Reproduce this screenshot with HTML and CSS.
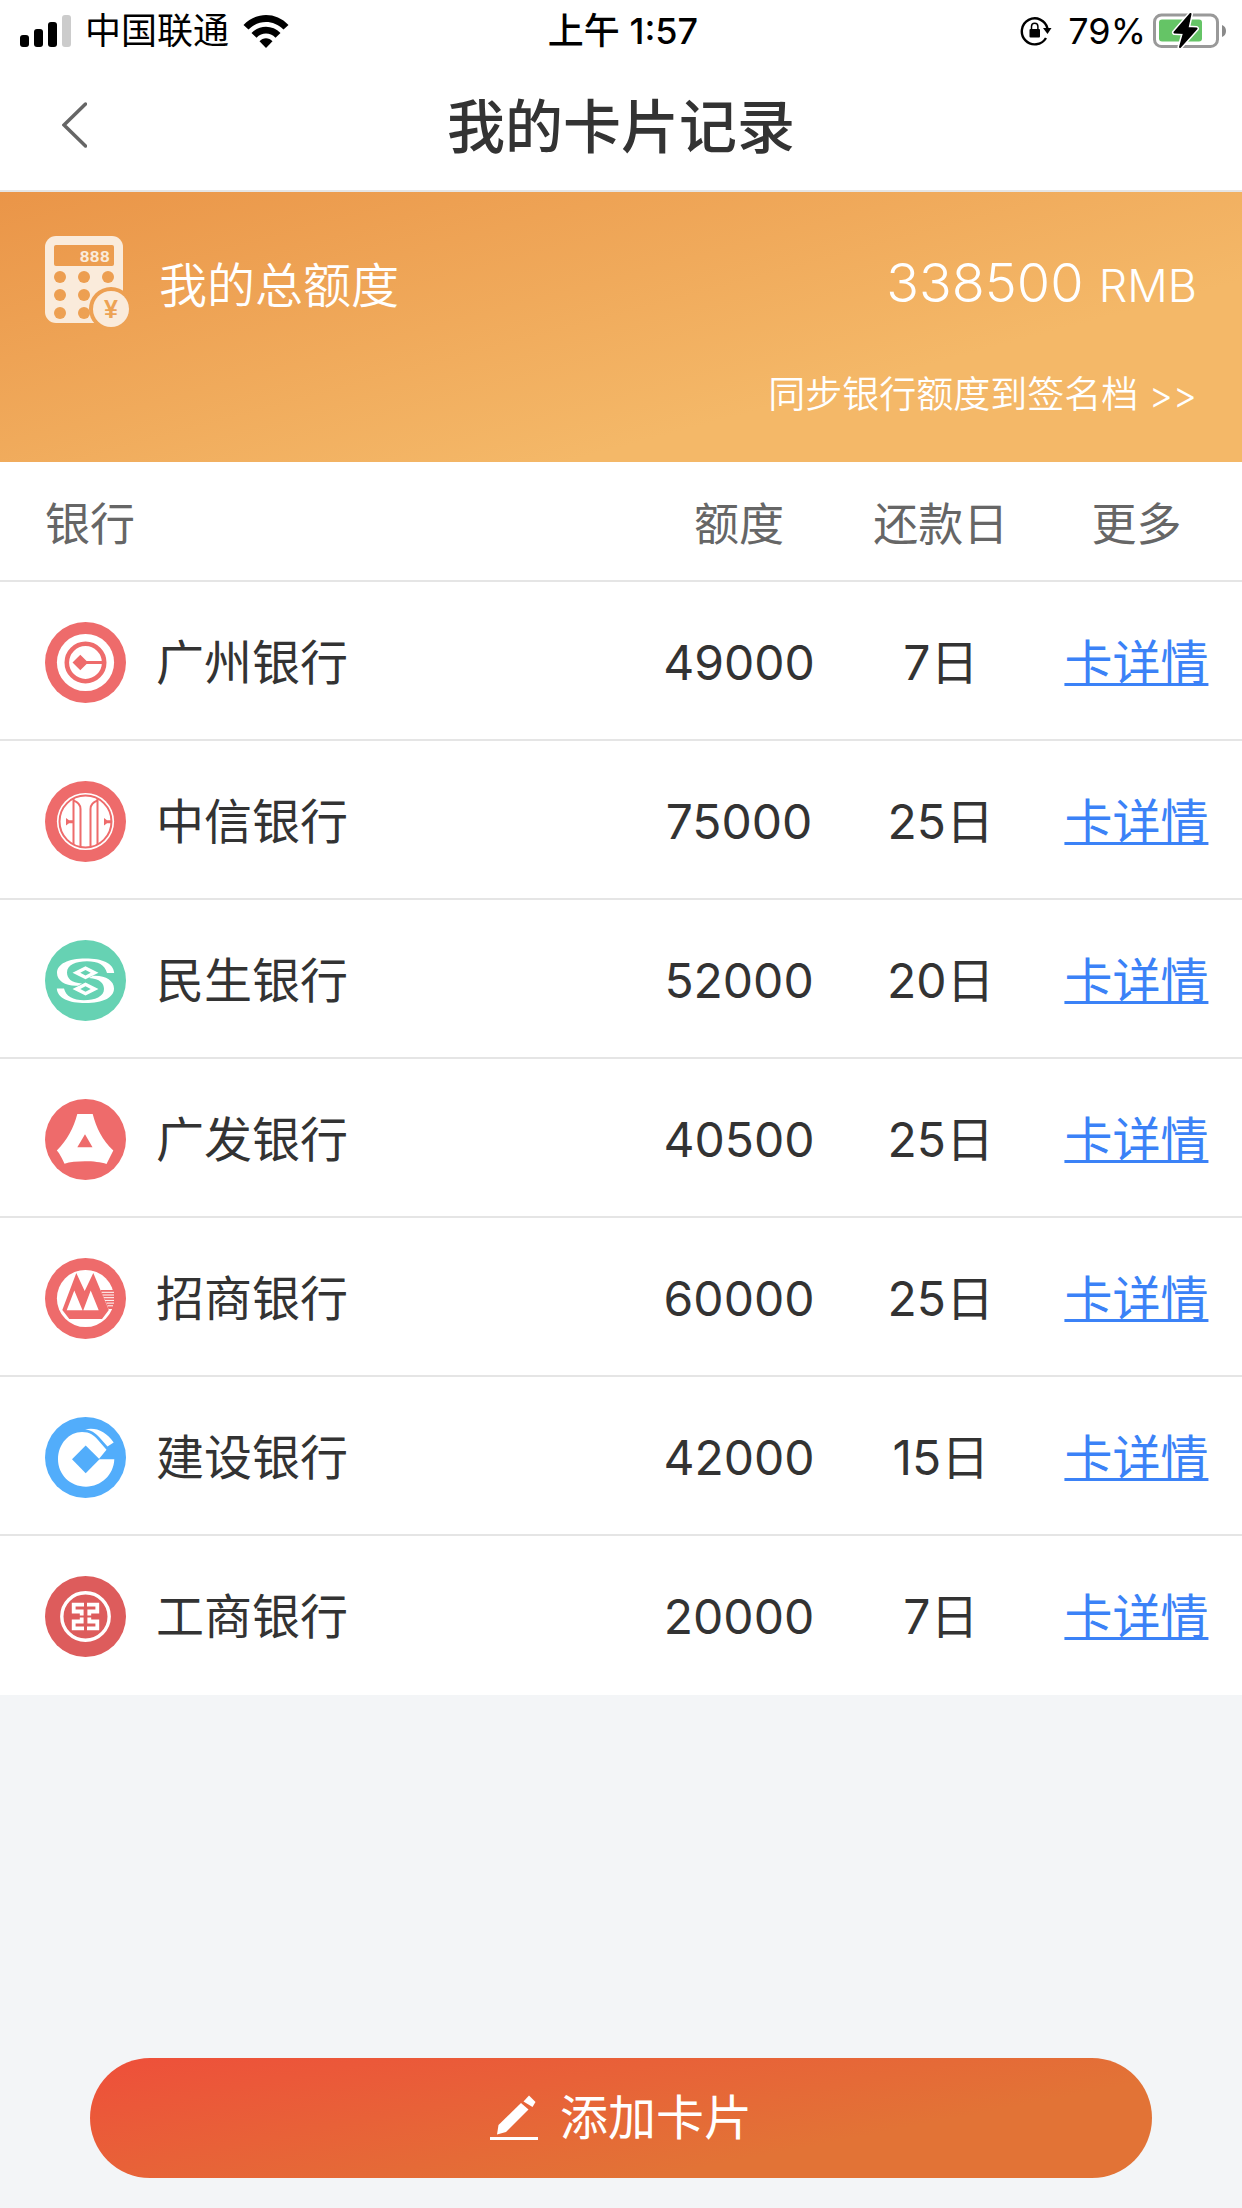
FILE: index.html
```html
<!DOCTYPE html>
<html lang="zh-CN">
<head>
    <meta charset="UTF-8">
    <meta name="viewport" content="width=device-width, initial-scale=1.0">
    <title>我的卡片记录</title>
    <link rel="stylesheet" href="styles.css">
</head>
<body>
    <div class="page">
        <!-- 状态栏 -->
        <div class="status-bar">
            <div class="status-left">
                <svg width="51" height="32" viewBox="0 0 51 32">
                    <rect x="0" y="20" width="9" height="12" rx="3"/>
                    <rect x="14" y="14" width="9" height="18" rx="3"/>
                    <rect x="28" y="7" width="9" height="25" rx="3"/>
                    <rect x="42" y="0" width="9" height="32" rx="3" fill="#ccc"/>
                </svg>
                <span>中国联通</span>
                <svg width="46" height="33" viewBox="0 0 46 33">
                    <path d="M0.5 10 C13 -3.3 33 -3.3 45.5 10 L40.5 14.5 C30.5 4.5 15.5 4.5 5.5 14.5 Z"/>
                    <path d="M8.5 18 C16.5 9.7 29.5 9.7 37.5 18 L32.5 22.7 C27 17.2 19 17.2 13.5 22.7 Z"/>
                    <path d="M16.5 26.3 C20 22.2 26 22.2 29.5 26.3 L23 33 Z"/>
                </svg>
            </div>
            <div class="status-time">上午 1:57</div>
            <div class="status-right">
                <svg width="32" height="30" viewBox="0 0 32 30">
                    <path d="M27.5 12.5 A13 13 0 1 0 26 22" fill="none" stroke="#000" stroke-width="2.4"/>
                    <path d="M23 12 H31.5 L27.5 18 Z"/>
                    <rect x="9.5" y="13" width="10.5" height="8.5" rx="1"/>
                    <path d="M11.5 13 V10.5 a3.2 3.2 0 0 1 6.4 0 V13" fill="none" stroke="#000" stroke-width="1.5"/>
                </svg>
                <span class="battery-text">79%</span>
                <svg width="73" height="36" viewBox="0 0 73 36">
                    <rect x="1.5" y="2" width="63" height="31.5" rx="7" fill="none" stroke="#999" stroke-width="3"/>
                    <path d="M69 12 a6.5 6.5 0 0 1 0 12 Z" fill="#8a8a8a"/>
                    <rect x="6" y="6.5" width="43" height="22" rx="3" fill="#65c466"/>
                    <path d="M37.5 1 L21.5 19.5 L31 20 L27 34 L43.5 15.5 L34.5 15 Z" stroke="#fff" stroke-width="5" stroke-linejoin="round"/>
                    <path d="M37.5 1 L21.5 19.5 L31 20 L27 34 L43.5 15.5 L34.5 15 Z" stroke="#000" stroke-width="2" stroke-linejoin="round"/>
                </svg>
            </div>
        </div>

        <!-- 标题栏 -->
        <header class="nav-bar">
            <button class="back" aria-label="返回">
                <svg width="25" height="46" viewBox="0 0 25 46">
                    <path d="M23.5 2 L2 23 L23.5 44" fill="none" stroke="#666" stroke-width="3.5" stroke-linecap="round"/>
                </svg>
            </button>
            <h1>我的卡片记录</h1>
        </header>

        <!-- 总额度 -->
        <section class="total">
            <div class="total-row">
                <svg width="84" height="92" viewBox="0 0 84 92">
                    <defs>
                        <mask id="calcMask">
                            <rect width="84" height="92" fill="#fff"/>
                            <rect x="9" y="9" width="60" height="21" rx="2" fill="#000"/>
                            <g fill="#000">
                                <circle cx="15" cy="41" r="6"/><circle cx="39" cy="41" r="6"/><circle cx="63" cy="41" r="6"/>
                                <circle cx="15" cy="59" r="6"/><circle cx="39" cy="59" r="6"/><circle cx="63" cy="59" r="6"/>
                                <circle cx="15" cy="77" r="6"/><circle cx="39" cy="77" r="6"/>
                                <circle cx="66" cy="73" r="22"/>
                            </g>
                        </mask>
                    </defs>
                    <rect width="78" height="87" rx="11" fill="#faebdb" mask="url(#calcMask)"/>
                    <text class="calc-num" x="65" y="26" text-anchor="end">888</text>
                    <circle cx="66" cy="73" r="18" fill="#faebdb"/>
                    <text class="calc-yen" x="66" y="82" text-anchor="middle">¥</text>
                </svg>
                <span class="total-label">我的总额度</span>
                <span class="total-value">338500 <small>RMB</small></span>
            </div>
            <a class="sync" href="#">同步银行额度到签名档 &gt;&gt;</a>
        </section>

        <!-- 卡片列表 -->
        <table class="cards">
            <thead>
                <tr>
                    <th class="col-bank">银行</th>
                    <th class="col-limit">额度</th>
                    <th class="col-day">还款日</th>
                    <th class="col-more">更多</th>
                </tr>
            </thead>
            <tbody>
                <tr>
                    <td>
                        <div class="bank">
                            <svg width="81" height="81" viewBox="0 0 81 81">
                                <circle cx="40.5" cy="40.5" r="40.5" fill="#ee6b6b"/>
                                <circle cx="40.5" cy="40.5" r="28.6" fill="#fff"/>
                                <circle cx="40.5" cy="40.5" r="18.7" fill="none" stroke="#ee6b6b" stroke-width="4.6"/>
                                <path d="M27.5 40.5 L35.3 32.7 L41.6 39 H58 V42 H41.6 L35.3 48.3 Z" fill="#ee6b6b"/>
                            </svg>
                            <span>广州银行</span>
                        </div>
                    </td>
                    <td>49000</td>
                    <td>7日</td>
                    <td><a href="#">卡详情</a></td>
                </tr>
                <tr>
                    <td>
                        <div class="bank">
                            <svg width="81" height="81" viewBox="0 0 81 81">
                                <circle cx="40.5" cy="40.5" r="40.5" fill="#ee6b6b"/>
                                <circle cx="40.5" cy="40.5" r="28.6" fill="#fff"/>
                                <g fill="none" stroke="#ee6b6b" stroke-width="2">
                                    <circle cx="40.5" cy="40.5" r="26"/>
                                    <path d="M28.5 18 V63 M52.5 18 V63"/>
                                    <path d="M28.5 19.5 C32.5 21 35.5 23.5 35.5 28 V66 M52.5 19.5 C48.5 21 45.5 23.5 45.5 28 V66"/>
                                </g>
                                <path d="M21 37 L24 39.3 H28 V42.3 H24 L21 44.5 Z M59 37 L62 39.3 H66 V42.3 H62 L59 44.5 Z" fill="#ee6b6b"/>
                            </svg>
                            <span>中信银行</span>
                        </div>
                    </td>
                    <td>75000</td>
                    <td>25日</td>
                    <td><a href="#">卡详情</a></td>
                </tr>
                <tr>
                    <td>
                        <div class="bank">
                            <svg width="81" height="81" viewBox="0 0 81 81">
                                <circle cx="40.5" cy="40.5" r="40.5" fill="#66d2b3"/>
                                <g fill="#fff">
                                    <path d="M69.2 33 C68.5 23 57 18.5 40.5 18.5 C23 18.5 12 24 12 33 C12 41 21 46.5 33 45.7 L37 43.5 C26 43 22 38 22 32.5 C22 25 31 21.3 42 21.3 C53 21.3 60 25 62 33 Z"/>
                                    <path d="M11.8 48.5 C12.5 58.5 24 63 40.5 63 C58 63 69 57.5 69 48.5 C69 40.5 60 35 48 35.8 L44 38 C55 38.5 59 43.5 59 49 C59 56.5 50 60.2 39 60.2 C28 60.2 21 56.5 19 48.5 Z"/>
                                    <path fill-rule="evenodd" d="M27.5 32.7 L40.5 26.3 L53.5 32.7 L40.5 39.2 Z M35.3 32.7 L40.5 35.5 L45.7 32.7 L40.5 29.9 Z"/>
                                    <path fill-rule="evenodd" d="M27.5 49 L40.5 42.5 L53.5 49 L40.5 55.5 Z M35.3 49 L40.5 51.8 L45.7 49 L40.5 46.2 Z"/>
                                </g>
                            </svg>
                            <span>民生银行</span>
                        </div>
                    </td>
                    <td>52000</td>
                    <td>20日</td>
                    <td><a href="#">卡详情</a></td>
                </tr>
                <tr>
                    <td>
                        <div class="bank">
                            <svg width="81" height="81" viewBox="0 0 81 81">
                                <circle cx="40.5" cy="40.5" r="40.5" fill="#ee6b6b"/>
                                <path fill="#fff" fill-rule="evenodd" d="M32.3 15 H47.7 C51.5 29 57 41 68.3 51.5 L61.5 65 C51 61.5 30 61.5 19.5 64.7 C16.5 58 13.5 53 11.8 51.5 C22.5 41 28.5 29 32.3 15 Z M40 35.3 L32.3 48.3 H47.5 Z"/>
                            </svg>
                            <span>广发银行</span>
                        </div>
                    </td>
                    <td>40500</td>
                    <td>25日</td>
                    <td><a href="#">卡详情</a></td>
                </tr>
                <tr>
                    <td>
                        <div class="bank">
                            <svg width="81" height="81" viewBox="0 0 81 81">
                                <circle cx="40.5" cy="40.5" r="40.5" fill="#ee6b6b"/>
                                <circle cx="40.5" cy="40.5" r="28.6" fill="#fff"/>
                                <path fill="#ee6b6b" d="M31.3 15 L39.7 33 L48.3 15 L63.8 52 L57 61 H24.3 L17.3 52 Z"/>
                                <path fill="#fff" d="M29.3 32.5 L37.5 52.3 H21.7 Z M45.7 32.5 L53.7 52.3 H38.3 Z"/>
                                <path fill="#ee6b6b" d="M55.5 32 H71 V51 H63.5 Z"/>
                                <path stroke="#fff" stroke-width="1" d="M57 34.3 H69 M58 37 H69 M59 39.7 H69 M60 42.4 H69 M61.5 45.1 H69 M62.5 47.8 H68"/>
                            </svg>
                            <span>招商银行</span>
                        </div>
                    </td>
                    <td>60000</td>
                    <td>25日</td>
                    <td><a href="#">卡详情</a></td>
                </tr>
                <tr>
                    <td>
                        <div class="bank">
                            <svg width="81" height="81" viewBox="0 0 81 81">
                                <circle cx="40.5" cy="40.5" r="40.5" fill="#52adfb"/>
                                <path fill="#fff" d="M54 42.3 H69.3 C68.8 58 56 69.7 41 69.7 C25 69.7 13 57.5 13 42.3 C13 27 24 15 37 15 C45 15 49 18.5 53 23 L61.5 32.7 L54.3 41.5 Z"/>
                                <path fill="#fff" d="M40 12.5 C51 10 61 14.5 68.7 25.5 L62.5 29.5 L54.5 20.5 C50 15.5 46 13 40 12.5 Z"/>
                                <path fill="#52adfb" d="M40.7 28.5 L54.5 42.3 L40.7 56.2 L27 42.3 Z"/>
                            </svg>
                            <span>建设银行</span>
                        </div>
                    </td>
                    <td>42000</td>
                    <td>15日</td>
                    <td><a href="#">卡详情</a></td>
                </tr>
                <tr>
                    <td>
                        <div class="bank">
                            <svg width="81" height="81" viewBox="0 0 81 81">
                                <circle cx="40.5" cy="40.5" r="40.5" fill="#dd5c5c"/>
                                <g fill="none" stroke="#fff">
                                    <circle cx="40.5" cy="40.5" r="23.7" stroke-width="3.4"/>
                                    <path stroke-width="3.8" d="M39 28.7 H28.7 V35.5 H36.7 V39.5 M39 52.3 H28.7 V45.5 H36.7 V41.5 M42 28.7 H52.3 V35.5 H44.3 V39.5 M42 52.3 H52.3 V45.5 H44.3 V41.5"/>
                                </g>
                            </svg>
                            <span>工商银行</span>
                        </div>
                    </td>
                    <td>20000</td>
                    <td>7日</td>
                    <td><a href="#">卡详情</a></td>
                </tr>
            </tbody>
        </table>

        <footer class="footer">
            <button class="add">
                <svg width="48" height="46" viewBox="0 0 48 46" fill="#fff">
                    <path d="M39 0.5 L45.5 7 L42.5 12 L33.5 6.5 Z"/>
                    <path d="M31 8 L38.5 14.5 L16 37 L7 39.5 L8.5 30 Z"/>
                    <rect x="0" y="42" width="48" height="3"/>
                </svg>
                <span>添加卡片</span>
            </button>
        </footer>
    </div>
</body>
</html>
```

FILE: styles.css
```css
* {
    box-sizing: border-box;
}
body {
    margin: 0;
    font-family: Inter, "Noto Sans CJK SC", sans-serif;
    font-size: 48px;
    font-weight: 380;
    color: #333;
    background-color: #f3f5f7;
}
button {
    border: none;
    background: none;
    padding: 0;
    font-family: inherit;
    font-weight: inherit;
    cursor: pointer;
}
svg {
    display: block;
    flex-shrink: 0;
}
.page {
    min-height: 100vh;
    display: flex;
    flex-direction: column;
}

/* 状态栏 */
.status-bar {
    display: grid;
    grid-template-columns: 1fr auto 1fr;
    align-items: center;
    height: 60px;
    padding: 2px 16px 0 20px;
    background-color: #fff;
    color: #000;
    font-size: 36px;
    line-height: 58px;
}
.status-left,
.status-right {
    display: flex;
    align-items: center;
}
.status-left {
    gap: 14px;
}
.status-right {
    justify-content: flex-end;
}
.status-time {
    font-weight: 500;
}
.battery-text {
    margin: 0 7px 0 16px;
}

/* 标题栏 */
.nav-bar {
    display: grid;
    grid-template-columns: 120px 1fr 120px;
    align-items: center;
    height: 132px;
    background-color: #fff;
    border-bottom: 2px solid #e5e5e5;
}
.back {
    display: flex;
    align-items: center;
    height: 100%;
    padding-left: 62px;
}
.nav-bar h1 {
    margin: 0;
    padding-top: 4px;
    font-size: 58px;
    font-weight: 500;
    line-height: 80px;
    text-align: center;
}

/* 总额度 */
.total {
    display: flex;
    flex-direction: column;
    gap: 40px;
    height: 270px;
    padding: 44px 45px 0;
    color: #fff;
    font-weight: 350;
    background: linear-gradient(165deg, #ea9548, #f4b868 70%);
}
.total-row {
    display: flex;
    align-items: center;
    height: 92px;
}
.calc-num {
    font: bold 17px "Liberation Mono", monospace;
    fill: #faebdb;
}
.calc-yen {
    font: bold 25px "Liberation Sans", sans-serif;
    fill: #eda354;
}
.total-label {
    margin-left: 30px;
}
.total-value {
    margin-left: auto;
    font-size: 54px;
}
.total-value small {
    font-size: 45px;
}
.sync {
    align-self: flex-end;
    color: #fff;
    font-size: 37px;
    line-height: 54px;
    text-decoration: none;
}

/* 卡片列表 */
.cards {
    width: 100%;
    table-layout: fixed;
    border-collapse: separate;
    border-spacing: 0;
    background-color: #fff;
}
.cards th,
.cards td {
    padding: 0;
    border-bottom: 2px solid #e5e5e5;
    text-align: center;
}
.cards th {
    height: 120px;
    color: #666;
    font-size: 45px;
    font-weight: 380;
}
.cards td {
    height: 159px;
    padding-top: 4px;
    line-height: 72px;
}
.cards tr:last-child td {
    border-bottom-color: #fff;
}
.cards .col-bank {
    padding-left: 45px;
    text-align: left;
}
.col-limit {
    width: 18%;
}
.col-day {
    width: 14.5%;
}
.col-more {
    width: 17%;
}
.bank {
    display: flex;
    align-items: center;
    gap: 30px;
    padding-left: 45px;
}
.cards a {
    color: #3b82f7;
    text-decoration: underline;
    text-decoration-thickness: 3px;
    text-decoration-skip-ink: none;
    text-underline-offset: 3px;
}

/* 底部按钮 */
.footer {
    margin-top: auto;
    padding: 30px 90px;
}
.add {
    display: flex;
    align-items: center;
    justify-content: center;
    gap: 22px;
    width: 100%;
    height: 120px;
    border-radius: 60px;
    color: #fff;
    font-size: 48px;
    line-height: 72px;
    background: linear-gradient(169deg, #ee4f3a, #e27336 70%);
}
```
